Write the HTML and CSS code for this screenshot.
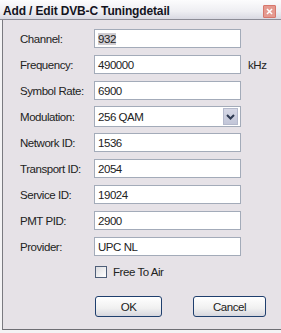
FILE: index.html
```html
<!DOCTYPE html>
<html lang="en">
<head>
  <meta charset="UTF-8" />
  <title>Add / Edit DVB-C Tuningdetail</title>
  <link rel="stylesheet" href="styles.css">
</head>
<body>
  <div class="dialog">
    <div class="titlebar">
      <span class="title">Add / Edit DVB-C Tuningdetail</span>
      <span class="close-btn">
        <svg width="13" height="13" viewBox="0 0 13 13">
          <path d="M3.5 3.5 L9.5 9.5 M9.5 3.5 L3.5 9.5" stroke="#fff" stroke-width="1.8" fill="none"/>
        </svg>
      </span>
    </div>

    <div class="dialog-body">
      <div class="row">
        <label>Channel:</label>
        <div class="field"><span class="selected">932</span></div>
      </div>
      <div class="row">
        <label>Frequency:</label>
        <div class="field">490000</div>
        <span class="unit">kHz</span>
      </div>
      <div class="row">
        <label>Symbol Rate:</label>
        <div class="field">6900</div>
      </div>
      <div class="row">
        <label>Modulation:</label>
        <div class="field combo">
          <span>256 QAM</span>
          <span class="combo-btn">
            <svg width="9" height="6" viewBox="0 0 9 6">
              <path d="M1 1 L4.5 4.5 L8 1" stroke="#2e3a52" stroke-width="2" fill="none"/>
            </svg>
          </span>
        </div>
      </div>
      <div class="row">
        <label>Network ID:</label>
        <div class="field">1536</div>
      </div>
      <div class="row">
        <label>Transport ID:</label>
        <div class="field">2054</div>
      </div>
      <div class="row">
        <label>Service ID:</label>
        <div class="field">19024</div>
      </div>
      <div class="row">
        <label>PMT PID:</label>
        <div class="field">2900</div>
      </div>
      <div class="row">
        <label>Provider:</label>
        <div class="field">UPC NL</div>
      </div>

      <div class="check-row">
        <span class="checkbox"></span>
        <span>Free To Air</span>
      </div>

      <div class="buttons">
        <button class="btn btn-ok">OK</button>
        <button class="btn btn-cancel">Cancel</button>
      </div>
    </div>
  </div>
</body>
</html>
```

FILE: styles.css
```css
body {
  margin: 0;
  background: #f4f3f5;
  font-family: "Liberation Sans", Arial, sans-serif;
  font-size: 11.5px;
  letter-spacing: -0.45px;
  color: #222;
}

.dialog {
  width: 281px;
  height: 333px;
}

.titlebar {
  height: 19px;
  display: flex;
  align-items: center;
  justify-content: space-between;
  padding: 0 5px 0 3px;
  background: linear-gradient(#fcfcfd, #eeeef2 60%, #d9d9e2);
  border-bottom: 1px solid #8c8c96;
}

.title {
  font-size: 12px;
  font-weight: bold;
  letter-spacing: -0.15px;
  color: #14141e;
  padding-top: 3px;
}

.close-btn {
  width: 13px;
  height: 13px;
  margin-top: 4px;
  background: #e59a90;
  border: 1px solid #d7776c;
  box-sizing: border-box;
  border-radius: 1px;
  display: flex;
  align-items: center;
  justify-content: center;
}

.close-btn svg {
  width: 11px;
  height: 11px;
}

.dialog-body {
  box-sizing: border-box;
  height: 310px;
  margin-left: 2px;
  padding: 9px 0 0 17px;
  background: #e6e2e7;
  border-left: 1px solid #7a7a80;
  border-bottom: 1px solid #6e6e74;
}

.row {
  display: flex;
  align-items: center;
  height: 19px;
  margin-bottom: 7px;
}

.row label {
  width: 74px;
}

.field {
  box-sizing: border-box;
  width: 147px;
  height: 19px;
  padding-left: 3px;
  display: flex;
  align-items: center;
  background: #fff;
  border: 1px solid #a3abb9;
}

.selected {
  background: #cfcdd2;
}

.unit {
  margin-left: 7px;
}

.combo {
  height: 21px;
  justify-content: space-between;
  padding-right: 2px;
}

.combo-btn {
  width: 15px;
  height: 17px;
  display: flex;
  align-items: center;
  justify-content: center;
  background: linear-gradient(#d6d8e6, #c2c6d8);
  border: 1px solid #b4b9cc;
  box-sizing: border-box;
}

.check-row {
  display: flex;
  align-items: center;
  gap: 6px;
  margin: 10px 0 0 75px;
  height: 12px;
}

.checkbox {
  box-sizing: border-box;
  width: 12px;
  height: 12px;
  border: 1px solid #4e5e78;
  background: linear-gradient(135deg, #dcdce0, #fff);
}

.buttons {
  display: flex;
  gap: 31px;
  margin: 18px 0 0 75px;
}

.btn {
  height: 21px;
  font-family: "Liberation Sans", Arial, sans-serif;
  font-size: 11.5px;
  letter-spacing: -0.45px;
  color: #1a1a1a;
  border: 1px solid #1f3f6e;
  border-radius: 3px;
  background: linear-gradient(#ffffff, #f0f0f0 60%, #d6d6de);
  padding: 0;
}

.btn-ok {
  width: 67px;
}

.btn-cancel {
  width: 73px;
}
```
